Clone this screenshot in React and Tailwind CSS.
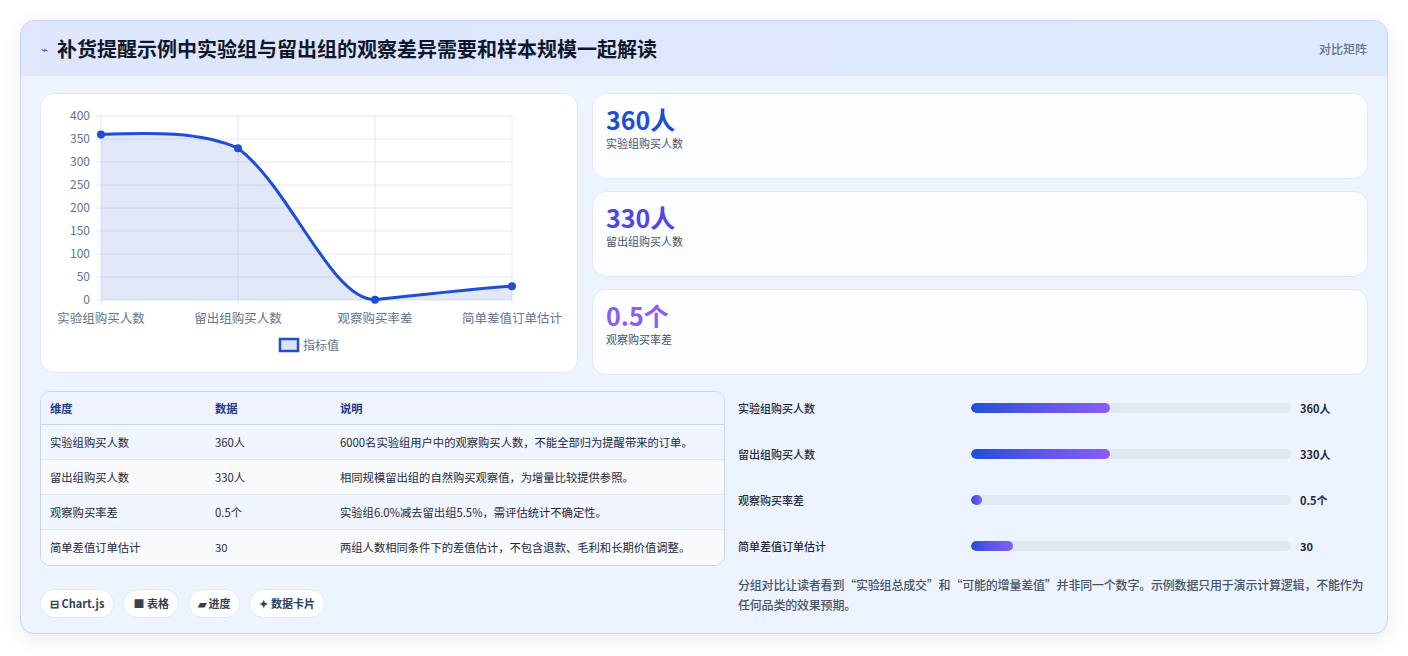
import React from "react";

const F = { fontFamily: '"Noto Sans CJK SC","Noto Sans",sans-serif' };

function Chart() {
  const xs = [100, 237, 374, 511];
  const y = (v) => 299 - (v / 400) * 184;
  const ys = [360, 330, 0.5, 30].map(y);
  const d = `M100,${ys[0]} C150,${ys[0] - 2} 200,${ys[0] - 3} 237,${ys[1]} C290,${ys[1] + 40} 330,${ys[2]} 374,${ys[2]} C420,${ys[2] - 5} 470,${ys[3] + 3} 511,${ys[3]}`;
  const ticks = [0, 50, 100, 150, 200, 250, 300, 350, 400];
  const labels = ["实验组购买人数", "留出组购买人数", "观察购买率差", "简单差值订单估计"];
  return (
    <svg width="538" height="280" viewBox="40 93 538 280" className="block">
      {ticks.map((t) => (
        <g key={t}>
          <line x1="95" x2="511" y1={y(t)} y2={y(t)} stroke="#e2e8f0" />
          <text x="89" y={y(t) + 4} textAnchor="end" fontSize="12" fill="#64748b" style={F}>{t}</text>
        </g>
      ))}
      {xs.map((x) => (
        <line key={x} x1={x} x2={x} y1="115" y2="304" stroke="#e2e8f0" />
      ))}
      <path d={`${d} L511,299 L100,299 Z`} fill="#1d4ed8" fillOpacity="0.13" />
      <path d={d} fill="none" stroke="#1d4ed8" strokeWidth="3" />
      {xs.map((x, i) => (
        <circle key={x} cx={x} cy={ys[i]} r="4" fill="#1d4ed8" />
      ))}
      {labels.map((l, i) => (
        <text key={l} x={xs[i]} y="322" textAnchor="middle" fontSize="12.5" fill="#64748b" style={F}>{l}</text>
      ))}
      <rect x="279" y="338" width="18" height="12" fill="#dbe4f7" stroke="#1d4ed8" strokeWidth="2.5" />
      <text x="302" y="349" fontSize="12" fill="#64748b" style={F}>指标值</text>
    </svg>
  );
}

const stats = [
  ["360人", "实验组购买人数", "text-[#1d4ed8]"],
  ["330人", "留出组购买人数", "text-[#4f46e5]"],
  ["0.5个", "观察购买率差", "text-[#8b5cf6]"],
];

const rows = [
  ["实验组购买人数", "360人", "6000名实验组用户中的观察购买人数，不能全部归为提醒带来的订单。"],
  ["留出组购买人数", "330人", "相同规模留出组的自然购买观察值，为增量比较提供参照。"],
  ["观察购买率差", "0.5个", "实验组6.0%减去留出组5.5%，需评估统计不确定性。"],
  ["简单差值订单估计", "30", "两组人数相同条件下的差值估计，不包含退款、毛利和长期价值调整。"],
];

const bars = [
  ["实验组购买人数", 43.5, "360人"],
  ["留出组购买人数", 43.5, "330人"],
  ["观察购买率差", 3.5, "0.5个"],
  ["简单差值订单估计", 13, "30"],
];

export default function App() {
  return (
    <div style={F} className="w-[1408px] h-[656px] bg-white pt-[20px] pl-[20px]">
      <div className="w-[1368px] h-[614px] rounded-[14px] border border-[#c7d2fe] bg-[#eef4ff] overflow-hidden shadow-[0_6px_20px_rgba(30,41,59,0.08)]">
        <div className="h-[55px] bg-gradient-to-r from-[#dfe6fd] to-[#dde9fd] flex items-center justify-between px-[20px]">
          <div className="flex items-center gap-[9px]">
            <span className="text-[#3b5bdb] text-[12px]">⌁</span>
            <span className="text-[20px] font-bold text-[#0f172a]">补货提醒示例中实验组与留出组的观察差异需要和样本规模一起解读</span>
          </div>
          <span className="text-[12px] text-[#64748b] font-medium">对比矩阵</span>
        </div>
        <div className="px-[19px] pt-[17px]">
          <div className="flex gap-[14px]">
            <div className="w-[538px] h-[280px] bg-white rounded-[14px] border border-[#e0e7ff] overflow-hidden">
              <Chart />
            </div>
            <div className="flex-1 flex flex-col gap-[12px]">
              {stats.map(([v, l, c]) => (
                <div key={l} className="h-[86px] bg-white/85 rounded-[14px] border border-[#e0e7ff] px-[13px] pt-[7px]">
                  <div className={`text-[25px] font-bold leading-[36px] ${c}`}>{v}</div>
                  <div className="text-[11px] text-[#475569] mt-[-2px]">{l}</div>
                </div>
              ))}
            </div>
          </div>
          <div className="flex gap-[13px] mt-[16px]">
            <div className="w-[691px]">
              <div className="rounded-[10px] border border-[#cbd5e1] overflow-hidden bg-white text-[11.3px]">
                <div className="flex h-[33px] items-center bg-[#eef3ff] text-[#1e3a8a] font-bold border-b border-[#cbd5e1]">
                  <div className="w-[174px] pl-[9px]">维度</div>
                  <div className="w-[125px]">数据</div>
                  <div className="flex-1">说明</div>
                </div>
                {rows.map((r, i) => (
                  <div key={r[0]} className={`flex h-[35px] items-center text-[#1e293b] ${i < 3 ? "border-b border-[#e2e8f0]" : ""} ${i % 2 ? "bg-[#f8fafc]" : "bg-[#f0f5ff]"}`}>
                    <div className="w-[174px] pl-[9px]">{r[0]}</div>
                    <div className="w-[125px]">{r[1]}</div>
                    <div className="flex-1">{r[2]}</div>
                  </div>
                ))}
              </div>
              <div className="flex gap-[9px] mt-[23px] text-[11px] text-[#334155] font-semibold">
                {["⊟ Chart.js", "■ 表格", "▰ 进度", "✦ 数据卡片"].map((t) => (
                  <span key={t} className="h-[29px] px-[9px] rounded-full bg-white border border-[#e2e8f0] flex items-center">{t}</span>
                ))}
              </div>
            </div>
            <div className="flex-1 -mt-[6px]">
              {bars.map(([l, w, v]) => (
                <div key={l} className="flex items-center h-[46px] text-[11px] font-medium text-[#1e293b]">
                  <div className="w-[233px]">{l}</div>
                  <div className="w-[320px] h-[10px] rounded-full bg-[#e2e8f0] overflow-hidden">
                    <div className="h-full rounded-full bg-gradient-to-r from-[#1d4ed8] to-[#8b5cf6]" style={{ width: `${w}%` }} />
                  </div>
                  <div className="ml-[9px] font-semibold">{v}</div>
                </div>
              ))}
              <p className="text-[12px] leading-[20px] text-[#475569] mt-[6px] w-[630px] font-medium tracking-[-0.2px]">分组对比让读者看到“实验组总成交”和“可能的增量差值”并非同一个数字。示例数据只用于演示计算逻辑，不能作为任何品类的效果预期。</p>
            </div>
          </div>
        </div>
      </div>
    </div>
  );
}
